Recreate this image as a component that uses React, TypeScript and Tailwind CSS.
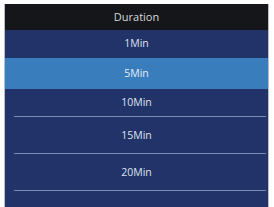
const options = [
  { label: '1Min', h: 'h-[28px]', line: false },
  { label: '5Min', h: 'h-[31px]', line: false, active: true },
  { label: '10Min', h: 'h-[28px]', line: true },
  { label: '15Min', h: 'h-[37px]', line: true },
  { label: '20Min', h: 'h-[37px]', line: true },
  { label: '', h: 'h-[37px]', line: false },
]

export default function App() {
  return (
    <div className="w-[274px] h-[207px] bg-white overflow-hidden pt-[4px] pl-[4px]" style={{ fontFamily: '"Open Sans", "Noto Sans", sans-serif' }}>
      <div className="w-[265px] border-x-[1.5px] border-[#b9bec6] bg-[#22336a]">
        {/* Header */}
        <div className="h-[26px] bg-[#141619] flex items-center justify-center text-[11px] text-[#d6d8dc]">
          Duration
        </div>

        {options.map((o) => (
          <div
            key={o.label || 'blank'}
            className={`${o.h} relative flex items-center justify-center text-[10.5px] ${
              o.active ? 'bg-[#3a7dbd] text-[#e4ecf6]' : 'text-[#dfe3ec]'
            }`}
          >
            {o.label}
            {o.line && (
              <div className="absolute bottom-0 left-[9px] right-[2px] h-px bg-[#7d8ab0]" />
            )}
          </div>
        ))}
      </div>
    </div>
  )
}
